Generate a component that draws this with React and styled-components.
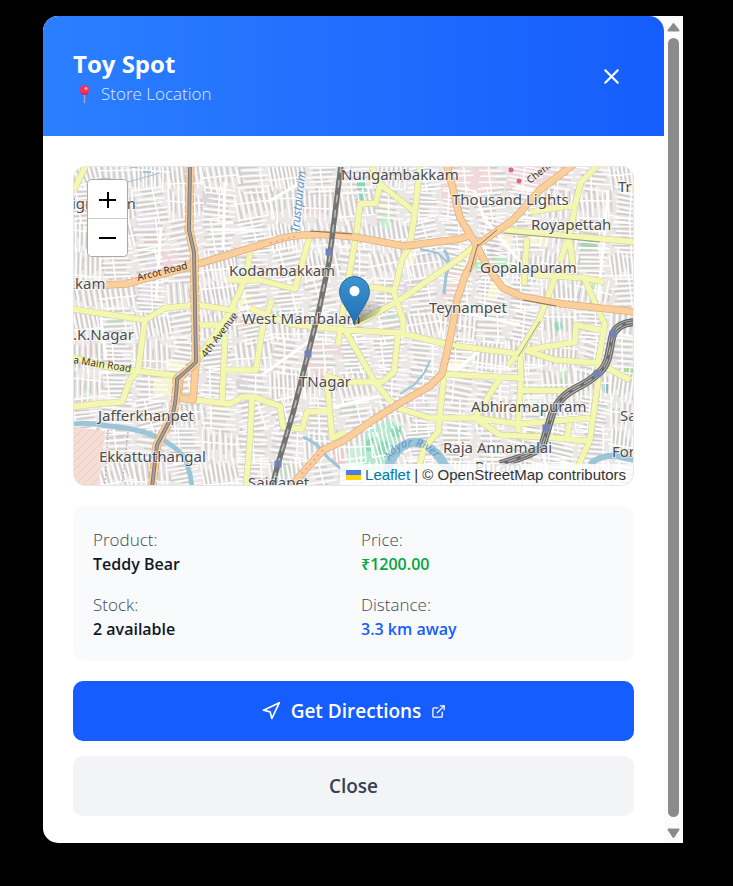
import { useState } from 'react';
import styled, { createGlobalStyle } from 'styled-components';
import { FiExternalLink, FiNavigation, FiX } from 'react-icons/fi';

const GlobalStyle = createGlobalStyle`
  * {
    box-sizing: border-box;
  }

  body {
    margin: 0;
    background: #000;
    font-family: 'Open Sans', 'Noto Sans', sans-serif;
  }

  button {
    font-family: inherit;
    border: 0;
    cursor: pointer;
  }
`;

const Overlay = styled.div`
  padding: 16px 50px 43px 43px;
`;

const Modal = styled.div`
  display: flex;
  max-width: 960px;
  margin: 0 auto;
  background: #fff;
  border-radius: 15px 0 0 15px;
  overflow: hidden;
`;

const Main = styled.div`
  flex: 1;
  min-width: 0;
`;

const Header = styled.header`
  display: flex;
  align-items: center;
  justify-content: space-between;
  height: 120px;
  padding: 0 30px;
  color: #fff;
  background: linear-gradient(90deg, #2b7fff, #155dfc);
  border-radius: 15px 15px 0 0;
`;

const Title = styled.h2`
  margin: 0;
  font-size: 24px;
  font-weight: 700;
  line-height: 35px;
`;

const Subtitle = styled.p`
  display: flex;
  align-items: center;
  gap: 4px;
  margin: 0;
  color: #dbeafe;
  font-size: 17px;
  font-weight: 300;
  line-height: 25px;
`;

const IconButton = styled.button`
  display: flex;
  padding: 10px;
  color: #fff;
  background: transparent;
  border-radius: 50%;
`;

const Body = styled.div`
  display: flex;
  flex-direction: column;
  gap: 20px;
  padding: 30px 30px 27px;
`;

const MapFrame = styled.div`
  position: relative;
  height: 320px;
  border: 1px solid #e5e7eb;
  border-radius: 12px;
  overflow: hidden;
`;

const MapSvg = styled.svg`
  display: block;
  width: 100%;
  height: 100%;
  font-family: 'Noto Sans', sans-serif;
`;

const ZoomBar = styled.div`
  position: absolute;
  top: 12px;
  left: 13px;
  display: flex;
  flex-direction: column;
  border: 1px solid #aaa;
  border-radius: 5px;
  overflow: hidden;
`;

const ZoomButton = styled.button`
  display: flex;
  align-items: center;
  justify-content: center;
  width: 39px;
  height: 38px;
  padding: 0;
  color: #000;
  background: #fff;

  & + & {
    border-top: 1px solid #ccc;
  }
`;

const Attribution = styled.div`
  position: absolute;
  right: 0;
  bottom: 0;
  padding: 0 7px 0 6px;
  color: #333;
  background: rgba(255, 255, 255, 0.8);
  font-family: 'Liberation Sans', Arial, sans-serif;
  font-size: 15px;
  line-height: 21px;

  a {
    color: #0078a8;
    text-decoration: none;
  }

  svg {
    margin-right: 4px;
  }
`;

const Details = styled.dl`
  display: grid;
  grid-template-columns: 1fr 1fr;
  gap: 15px;
  margin: 0;
  padding: 21px 20px 19px;
  background: #f9fafb;
  border-radius: 10px;
  line-height: 25px;
`;

const Label = styled.dt`
  color: #3f4a5a;
  font-size: 17px;
  font-weight: 300;
`;

const Value = styled.dd`
  margin: 0;
  color: ${({ $color }) => $color || '#101828'};
  font-size: 16px;
  font-weight: 600;
`;

const Actions = styled.div`
  display: flex;
  flex-direction: column;
  gap: 15px;
`;

const ActionButton = styled.button`
  display: flex;
  align-items: center;
  justify-content: center;
  gap: 10px;
  height: 60px;
  color: ${({ $primary }) => ($primary ? '#fff' : '#364153')};
  background: ${({ $primary }) => ($primary ? '#155dfc' : '#f3f4f6')};
  border-radius: 10px;
  font-size: 19px;
  font-weight: 600;
`;

const ScrollTrack = styled.div`
  display: flex;
  flex-direction: column;
  align-items: center;
  gap: 5px;
  width: 19px;
  padding: 6px 0 4px;
  background: #fcfcfc;
`;

const ScrollThumb = styled.div`
  flex: 1;
  width: 11px;
  margin-bottom: 6px;
  background: #8b8b8b;
  border-radius: 6px;
`;

const random = seed => {
  let s = seed;
  return () => {
    s = (s * 16807) % 2147483647;
    return s / 2147483647;
  };
};

// small blocks and lanes that fill the space between the main roads
const buildLanes = () => {
  const rnd = random(4217);
  const lanes = [];
  const houses = [];
  const patches = [];
  const colors = ['#e6d6e3', '#f0d9d6', '#cdeacb', '#f6f3cf', '#dcd5dc', '#efe6d9'];
  for (let y = 160; y < 500; y += 30) {
    for (let x = 66; x < 650; x += 34) {
      const angle = (rnd() - 0.5) * 0.34 + (x > 430 ? 0.04 : -0.08);
      const cos = Math.cos(angle);
      const sin = Math.sin(angle);
      const at = (u, v) =>
        `${(x + 17 + u * cos - v * sin).toFixed(1)} ${(y + 15 + u * sin + v * cos).toFixed(1)}`;
      const vertical = rnd() > 0.58;
      const seg = (a, b, from, to) =>
        vertical ? `M${at(a, from)}L${at(b, to)}` : `M${at(from, a)}L${at(to, b)}`;
      const step = 4 + rnd() * 2;
      for (let v = -17; v < 18; v += step) {
        const j = rnd() * 2;
        lanes.push(seg(v, v + j, -18 + rnd() * 8, 19 - rnd() * 8));
        houses.push(seg(v + step / 2, v + step / 2 + j, -17 + rnd() * 12, 15 - rnd() * 12));
      }
      const cut = (rnd() - 0.5) * 20;
      lanes.push(
        vertical
          ? `M${at(-19, cut)}L${at(19, cut + 2)}`
          : `M${at(cut, -18)}L${at(cut + 2, 18)}`
      );
      if (rnd() > 0.68) {
        patches.push({
          x: x + rnd() * 18,
          y: y + rnd() * 16,
          w: 6 + rnd() * 13,
          h: 5 + rnd() * 10,
          fill: colors[Math.floor(rnd() * colors.length)],
        });
      }
    }
  }
  return { lanes: lanes.join(''), houses: houses.join(''), patches };
};

const LANES = buildLanes();

const AREAS = [
  ['#f4ddd5', 'M74 427L105 431L98 486H74Z'],
  ['#f0d9db', 'M455 168L490 167L500 186L480 194L457 190Z'],
  ['#f0d9db', 'M510 167L560 167L550 184L525 200L505 184Z'],
  ['#f0d6d7', 'M448 180L456 215L444 212L440 184Z'],
  ['#f0d6d7', 'M446 272L465 272L458 298L441 300Z'],
  ['#f0d6d7', 'M310 340L345 348L343 356L307 348Z'],
  ['#f0d6d7', 'M305 360L330 368L328 376L303 367Z'],
  ['#f0d6d7', 'M163 252L178 252L180 270L161 273Z'],
  ['#e6dbe7', 'M137 214L158 216L155 228L136 227Z'],
  ['#e6dbe7', 'M149 257L158 256L150 304L139 300Z'],
  ['#e6dbe7', 'M405 405L424 394L426 412L412 410Z'],
  ['#e6dbe7', 'M157 455L172 458L181 473L160 475Z'],
  ['#ddd8d8', 'M142 359L164 360L163 370L142 369Z'],
  ['#f8f5d0', 'M168 361L186 363L184 370L167 368Z'],
  ['#f8f5d0', 'M154 379L174 377L171 396L153 393Z'],
  ['#f8f5d0', 'M530 235L549 236L547 247L531 246Z'],
  ['#f8f5d0', 'M500 235L513 236L511 248L502 247Z'],
  ['#f8f5d0', 'M491 282L503 287L496 301L486 300Z'],
  ['#f8f5d0', 'M446 362L466 360L465 371L448 371Z'],
  ['#f8f5d0', 'M404 251L417 250L414 264L405 264Z'],
  ['#c7c5c6', 'M487 250L496 243L507 254L500 262L493 262Z'],
  ['#b7edbe', 'M493 259L505 257L514 266L506 268L496 266Z'],
  ['#b7edbe', 'M473 262L484 257L489 268L476 270Z'],
  ['#a4d2b4', 'M581 241L597 241V250H581Z'],
  ['#7fd8ae', 'M357 182L365 181V190H357Z'],
  ['#7fd8ae', 'M357 193L365 191V200H357Z'],
  ['#c6eccf', 'M382 215H391V229H382Z'],
  ['#c9efd9', 'M340 485L349 448L365 440L358 485Z'],
  ['#afe9cc', 'M365 432L390 419L402 430L392 462L380 480L356 475Z'],
  ['#86d7b1', 'M367 440L374 437L372 452L364 450Z'],
  ['#86d7b1', 'M391 428L401 426V437H391Z'],
  ['#86d7b1', 'M379 442L389 440L386 458L377 455Z'],
  ['#f1cccc', 'M330 458L346 451L343 470L332 462Z'],
  ['#8bddb9', 'M554 323L560 321L563 328L556 332Z'],
  ['#79b9cb', 'M604 384H608V393H604Z'],
  ['#afd6a1', 'M624 368L633 366V376L624 374Z'],
  ['#eab8cc', 'M508 168L515 168L512 173Z'],
];

const WATER = [
  ['M74 424Q90 422 108 426Q138 428 157 437Q176 446 183 456Q190 468 192 487', 5],
  ['M385 480Q388 461 399 449Q412 438 425 445Q438 452 445 466L460 482', 9],
  ['M303 437Q320 444 327 457L347 474', 3],
  ['M590 464Q602 454 616 456L635 460', 6],
  ['M444 250Q452 258 446 276L444 294', 3],
  ['M420 249L438 253L450 265', 2],
  ['M85 182L105 178L128 182L160 173', 1],
  ['M130 167H138M143 172H151', 2],
  ['M400 394L415 384L425 372L430 360', 2],
];

const YELLOW = [
  'M86 165L74 190',
  'M72 309L145 320L165 308L198 305L238 311',
  'M145 320L138 370L130 380L122 402L95 404L72 407',
  'M72 357L108 367L138 371L180 376',
  'M251 246L246 278L230 312L196 362',
  'M198 325H218L225 340L222 402',
  'M225 370L256 370L263 325L272 300',
  'M195 400L230 404L242 397L255 397L272 404',
  'M252 398L250 440L246 487',
  'M228 280L260 280L295 289L310 235',
  'M372 167L380 184L376 203L360 204L357 230L344 305L338 345',
  'M380 184L415 212L420 165',
  'M415 212L410 244L402 260L394 293L403 320V333',
  'M370 287L397 291',
  'M354 325L400 300L460 258L477 244',
  'M530 212L575 205L581 182L598 165',
  'M504 230L560 235L635 242',
  'M527 238L524 285',
  'M575 207L569 236L560 262M569 236L573 265',
  'M535 275L585 278L604 282',
  'M555 278L539 320L518 354L508 365',
  'M585 280L605 325L598 362V382L590 440L570 484',
  'M250 308L290 324L345 330L400 333L450 345L520 354L521 378L518 432',
  'M346 332L375 382L391 402',
  'M398 334L394 372L382 382L345 382L325 375',
  'M326 376L329 402L332 438L345 432',
  'M262 400L280 406L283 427L302 429L307 412L330 410',
  'M398 408L430 418L475 418L500 435L545 437L588 441',
  'M440 374L520 378M444 376L438 432L424 448L414 486',
  'M500 378L475 418L520 424L590 418',
  'M522 390L570 391M570 420L567 438',
  'M525 350L555 360L598 363L630 380',
  'M527 350L575 342L576 325L605 331',
];

const ORANGE = [
  'M106 285L126 284L195 265L270 242Q300 230 355 237L404 246L460 239L473 234',
  'M447 165L460 218L474 241L490 271L503 288L523 297L563 304L635 312',
  'M583 157L540 190L513 220L477 245L472 262L465 276L457 300L451 334L442 374L430 386L400 403L373 420L343 441L323 450L290 487',
  'M196 362L193 400L178 398L180 378',
];

const TRUNK =
  'M190 165L189 230L194 252L196 362Q190 368 177 379Q176 410 170 420L157 445L152 487';

const RAILS = [
  'M341 165L329 262L319 310L308 354L293 413L278 464L272 487',
  'M635 322Q618 323 613 334C609 348 610 366 597 374C584 389 564 386 552 414L542 447Q532 455 500 464',
];

const STATIONS = [
  [329, 252],
  [308, 354],
  [278, 464],
  [613, 334],
  [597, 374],
  [546, 428],
];

const PLACES = [
  ['igramam', 72, 209],
  ['kkam', 67, 289],
  ['.K.Nagar', 73, 340],
  ['Nungambakkam', 341, 180],
  ['Thousand Lights', 452, 205],
  ['Royapettah', 531, 230],
  ['Triplicane', 618, 192],
  ['Kodambakkam', 229, 276],
  ['Gopalapuram', 480, 273],
  ['West Mambalam', 242, 324],
  ['Teynampet', 429, 313],
  ['TNagar', 299, 387],
  ['Jafferkhanpet', 98, 421],
  ['Abhiramapuram', 471, 412],
  ['Ekkattuthangal', 99, 462],
  ['Raja Annamalai', 443, 453],
  ['Puram', 475, 472],
  ['Saidapet', 248, 488],
  ['Santhome', 620, 421],
  ['Foreshore', 612, 457],
];

const MapDrawing = () => (
  <MapSvg viewBox="74 167 559 318" preserveAspectRatio="xMidYMid slice" role="img" aria-label="Map">
    <defs>
      <linearGradient id="pin" x1="0" y1="0" x2="0" y2="1">
        <stop offset="0" stopColor="#3e93cf" />
        <stop offset="1" stopColor="#1c6fb6" />
      </linearGradient>
      <linearGradient id="shade" x1="0" y1="1" x2="1" y2="0">
        <stop offset="0" stopColor="#000" stopOpacity="0.6" />
        <stop offset="1" stopColor="#000" stopOpacity="0.02" />
      </linearGradient>
      <pattern id="hatch" width="8" height="8" patternUnits="userSpaceOnUse">
        <path d="M0 8L8 0" stroke="#e6c4bd" strokeWidth="0.7" />
      </pattern>
      <path id="adyar" d="M390 461Q397 447 412 446Q430 446 446 472" />
    </defs>
    <rect x="74" y="167" width="559" height="318" fill="#eae7e6" />
    {LANES.patches.map((p, i) => (
      <rect key={i} x={p.x} y={p.y} width={p.w} height={p.h} fill={p.fill} />
    ))}
    <path d={LANES.houses} stroke="#d0cccb" strokeWidth="1.6" />
    {AREAS.map(([fill, d]) => (
      <path key={d} d={d} fill={fill} opacity="0.9" />
    ))}
    <path d={LANES.lanes} stroke="#fff" strokeWidth="1.5" />
    <path d="M74 427L105 431L98 486H74Z" fill="#f4ddd5" />
    <path d="M74 427L105 431L98 486H74Z" fill="url(#hatch)" />
    <g fill="none" stroke="#fff" strokeWidth="3">
      <path d="M161 227L156 300M210 230H262M225 182L223 250M262 375L318 335M100 310L106 360M300 180L296 230M268 202L305 180" />
      <path d="M474 190L484 218L510 250L525 268M608 190L603 250L598 300M440 384L478 352M300 415L380 396M540 440L550 485M450 310L520 325" />
    </g>
    <g fill="none" stroke="#9bc5d8">
      {WATER.map(([d, width]) => (
        <path key={d} d={d} strokeWidth={width} />
      ))}
    </g>
    <g fill="none" strokeLinejoin="round">
      <path d={YELLOW.join('')} stroke="#d0d0a2" strokeWidth="6.6" />
      <path d={YELLOW.join('')} stroke="#f3f7b0" strokeWidth="5.4" />
      <path d="M504 230L560 235L600 239M518 354L540 318" stroke="#8d8f70" strokeWidth="0.8" transform="translate(0 3)" />
      <path d={ORANGE.join('')} stroke="#dfb07c" strokeWidth="7.6" />
      <path d={ORANGE.join('')} stroke="#fbcf9c" strokeWidth="6" />
      <path d={TRUNK} stroke="#dcae7c" strokeWidth="9" strokeDasharray="8 2" />
      <path d={TRUNK} stroke="#f8cf9e" strokeWidth="7.4" />
      <path d={TRUNK} stroke="#77716d" strokeWidth="3.8" />
      <path d={TRUNK} stroke="#a59e99" strokeWidth="2.2" />
      <path d="M478 244L474 258L470 272M497 230L478 246M523 300L556 306M310 231L352 234" stroke="#7e6a50" strokeWidth="0.9" />
      <path d="M270 243L298 236M323 450L300 476M460 330L447 365" stroke="#e39d8a" strokeWidth="1.4" strokeDasharray="2 4" />
      <path d={RAILS[0]} stroke="#737373" strokeWidth="5.4" />
      <path d={RAILS[0]} stroke="#bababa" strokeWidth="1.6" strokeDasharray="8 7" />
      <path d={RAILS[1]} stroke="#696969" strokeWidth="8" />
      <path d={RAILS[1]} stroke="#bcbcbc" strokeWidth="5.4" />
      <path d={RAILS[1]} stroke="#696969" strokeWidth="3.6" />
      <path d={RAILS[1]} stroke="#b5b5b5" strokeWidth="1.2" strokeDasharray="9 4" />
      <path d="M108 430L105 486M128 432L122 484" stroke="#c6a9c6" strokeWidth="1.2" strokeDasharray="2 2" />
    </g>
    {STATIONS.map(([x, y]) => (
      <rect key={x} x={x - 3.5} y={y - 3.5} width="7" height="7" fill="#7381b8" />
    ))}
    <g fill="#e0658c">
      <circle cx="511" cy="170" r="2.5" />
      <circle cx="519" cy="181" r="2.5" />
    </g>
    <g fontSize="15" fill="#4d4d4d" stroke="#fff" strokeOpacity="0.6" strokeWidth="2" paintOrder="stroke">
      {PLACES.map(([name, x, y]) => (
        <text key={name} x={x} y={y}>
          {name}
        </text>
      ))}
    </g>
    <g fontSize="10" fill="#3c372c">
      <text transform="translate(138 281) rotate(-14)">Arcot Road</text>
      <text transform="translate(206 358) rotate(-53)">4th Avenue</text>
      <text transform="translate(73 363) rotate(9)">a Main Road</text>
      <text transform="translate(530 184) rotate(-38)">Chennai</text>
    </g>
    <g fontSize="12" fill="#6398cb" fontStyle="italic">
      <text transform="translate(299 233) rotate(-84)">Trustpuram</text>
      <text fontSize="11">
        <textPath href="#adyar">Adyar River</textPath>
      </text>
    </g>
    <path d="M355 325L363 306Q371 298 381 302Q385 308 376 315Z" fill="url(#shade)" opacity="0.75" />
    <path
      d="M354.5 325C352 313 339.5 303 339.5 291.5A15 15 0 0 1 369.5 291.5C369.5 303 357 313 354.5 325Z"
      fill="url(#pin)"
      stroke="#2a6c9f"
    />
    <circle cx="354.5" cy="291" r="5.5" fill="#fff" stroke="#2d77ae" strokeWidth="0.8" />
  </MapSvg>
);

const PushPin = () => (
  <svg width="24" height="20" viewBox="0 0 24 20" aria-hidden="true">
    <path d="M11.5 9V19" stroke="#a9a3b4" strokeWidth="1.5" />
    <circle cx="11.5" cy="6" r="5" fill="#f0325f" />
    <path d="M7 8A5 5 0 0 0 16 8Q11 11 7 8Z" fill="#c41c50" />
    <circle cx="13" cy="4.5" r="1.5" fill="#ffb3c6" />
  </svg>
);

const Arrow = ({ down }) => (
  <svg width="13" height="11" viewBox="0 0 13 11" aria-hidden="true">
    <path
      d={down ? 'M1.5 1.5H11.5L6.5 9Z' : 'M1.5 8.5H11.5L6.5 2Z'}
      fill="#8b8b8b"
      stroke="#8b8b8b"
      strokeWidth="2"
      strokeLinejoin="round"
    />
  </svg>
);

const details = [
  { label: 'Product:', value: 'Teddy Bear' },
  { label: 'Price:', value: '₹1200.00', color: '#00a63e' },
  { label: 'Stock:', value: '2 available' },
  { label: 'Distance:', value: '3.3 km away', color: '#155dfc' },
];

const App = () => {
  const [open, setOpen] = useState(true);
  const close = () => setOpen(false);

  return (
    <>
      <GlobalStyle />
      {open && (
        <Overlay>
          <Modal role="dialog" aria-labelledby="store-name">
            <Main>
              <Header>
                <div>
                  <Title id="store-name">Toy Spot</Title>
                  <Subtitle>
                    <PushPin />
                    Store Location
                  </Subtitle>
                </div>
                <IconButton type="button" aria-label="Close dialog" onClick={close}>
                  <FiX size={25} />
                </IconButton>
              </Header>
              <Body>
                <MapFrame>
                  <MapDrawing />
                  <ZoomBar>
                    <ZoomButton type="button" aria-label="Zoom in">
                      <svg width="17" height="17" viewBox="0 0 17 17">
                        <path d="M0 9H17M9 1V17" stroke="currentColor" strokeWidth="2" />
                      </svg>
                    </ZoomButton>
                    <ZoomButton type="button" aria-label="Zoom out">
                      <svg width="17" height="17" viewBox="0 0 17 17">
                        <path d="M0 9H17" stroke="currentColor" strokeWidth="2" />
                      </svg>
                    </ZoomButton>
                  </ZoomBar>
                  <Attribution>
                    <a href="https://leafletjs.com">
                      <svg width="15" height="10" viewBox="0 0 15 10" aria-hidden="true">
                        <path fill="#4c7be1" d="M0 0h15v5H0z" />
                        <path fill="#ffd500" d="M0 5h15v5H0z" />
                      </svg>
                      Leaflet
                    </a>{' '}
                    | © OpenStreetMap contributors
                  </Attribution>
                </MapFrame>
                <Details>
                  {details.map(({ label, value, color }) => (
                    <div key={label}>
                      <Label>{label}</Label>
                      <Value $color={color}>{value}</Value>
                    </div>
                  ))}
                </Details>
                <Actions>
                  <ActionButton type="button" $primary>
                    <FiNavigation size={20} />
                    Get Directions
                    <FiExternalLink size={15} />
                  </ActionButton>
                  <ActionButton type="button" onClick={close}>
                    Close
                  </ActionButton>
                </Actions>
              </Body>
            </Main>
            <ScrollTrack>
              <Arrow />
              <ScrollThumb />
              <Arrow down />
            </ScrollTrack>
          </Modal>
        </Overlay>
      )}
    </>
  );
};

export default App;
